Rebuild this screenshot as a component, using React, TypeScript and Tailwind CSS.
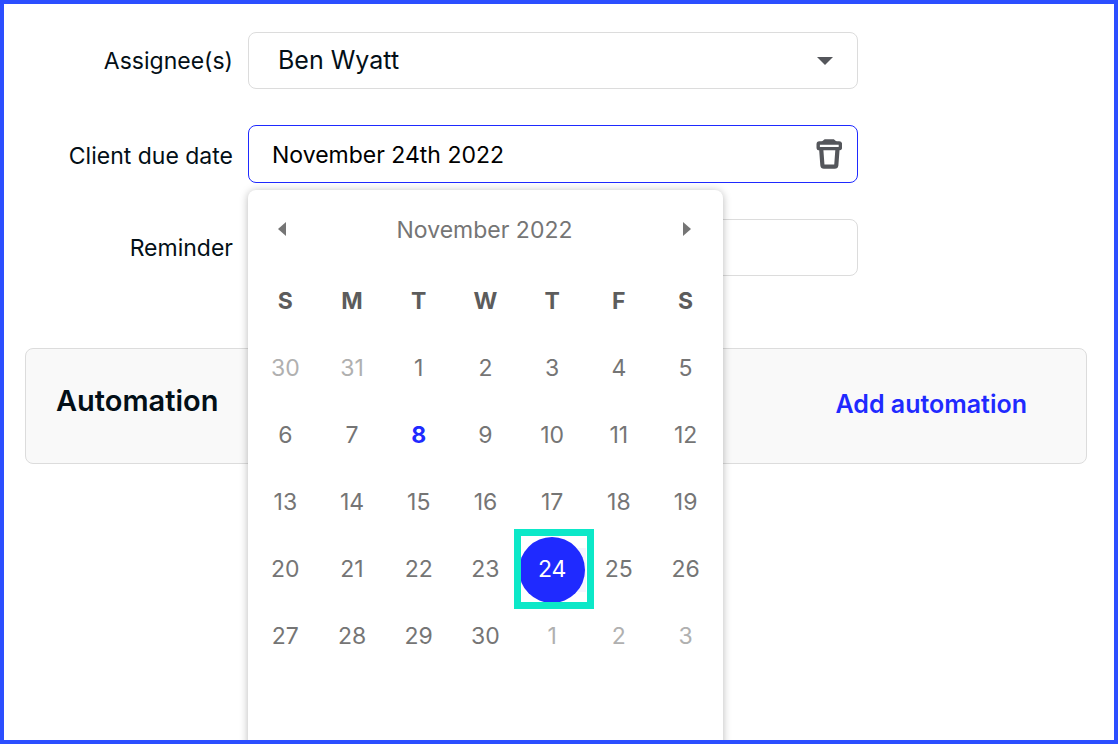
import { useState } from "react";

type Day = { day: number; outside?: boolean };

const weekdays = ["S", "M", "T", "W", "T", "F", "S"];

// November 2022, with the neighbouring days that fill the first and last week
const days: Day[] = [
  { day: 30, outside: true },
  { day: 31, outside: true },
  ...Array.from({ length: 30 }, (_, i) => ({ day: i + 1 })),
  { day: 1, outside: true },
  { day: 2, outside: true },
  { day: 3, outside: true },
];

const weeks = [0, 1, 2, 3, 4].map(w => days.slice(w * 7, w * 7 + 7));
const today = 8;

function TrashIcon() {
  return (
    <svg viewBox="0 0 26 30" className="h-[30px] w-[26px]" fill="none" stroke="#54565b" strokeLinejoin="round">
      <path d="M5 3.2 L8.6 0.2 H17.8 L21.4 3.2 Z" fill="#54565b" stroke="none" />
      <rect x="2.2" y="4" width="22.2" height="5.6" rx="1.2" strokeWidth="3.4" />
      <path d="M5.2 10 L6.4 26.2 Q6.6 27.6 7.9 27.6 H18.7 Q20.1 27.6 20.3 26.2 L21.5 10" strokeWidth="4.2" />
    </svg>
  );
}

function Calendar({ selected, onSelect }: { selected: number; onSelect: (day: number) => void }) {
  return (
    <div className="absolute left-0 top-full z-10 mt-[7px] h-[600px] w-[475px] rounded-lg bg-white px-1 shadow-[0_1px_8px_rgba(0,0,0,0.28)]">
      <div className="flex h-[77px] items-center justify-between pl-[22px] pr-6 text-[#757575]">
        <button type="button" aria-label="Previous month" className="px-1">
          <svg viewBox="0 0 8 14" className="h-[14px] w-2" fill="#757575">
            <path d="M8 0 V14 L0 7 Z" />
          </svg>
        </button>
        <span className="pt-1 text-[23px]">November 2022</span>
        <button type="button" aria-label="Next month" className="px-1">
          <svg viewBox="0 0 8 14" className="h-[14px] w-2" fill="#757575">
            <path d="M0 0 V14 L8 7 Z" />
          </svg>
        </button>
      </div>

      <table className="w-full table-fixed text-center text-[23px] text-[#757575]">
        <thead>
          <tr className="h-[68px]">
            {weekdays.map((name, i) => (
              <th key={i} scope="col" className="p-0 font-bold text-[#5c5c5c]">{name}</th>
            ))}
          </tr>
        </thead>
        <tbody>
          {weeks.map((week, w) => (
            <tr key={w} className="h-[67px]">
              {week.map(({ day, outside }) => {
                const isSelected = !outside && day === selected;
                const isToday = !outside && day === today;
                return (
                  <td key={day} className="p-0">
                    <div className="relative flex justify-center">
                      {isSelected && (
                        <span className="absolute inset-y-[11px] right-0 w-1/2 bg-[#f4f4ff]" />
                      )}
                      <button
                        type="button"
                        onClick={() => !outside && onSelect(day)}
                        aria-pressed={isSelected}
                        className={`relative size-[66px] rounded-full
                                    ${isSelected ? "bg-[#1f2aff] text-white" : ""}
                                    ${isToday && !isSelected ? "font-bold text-[#1f2aff]" : ""}
                                    ${outside ? "text-[#b0b0b0]" : ""}`}
                      >
                        {day}
                      </button>
                      {isSelected && (
                        <span className="pointer-events-none absolute -bottom-1.5 -left-[5px] -right-2 -top-2 border-[7px] border-[#0ce8c8]" />
                      )}
                    </div>
                  </td>
                );
              })}
            </tr>
          ))}
        </tbody>
      </table>
    </div>
  );
}

export default function App() {
  const [selected, setSelected] = useState(24);

  return (
    <main className="min-h-screen overflow-hidden border-4 border-[#2b4eff] bg-white pt-7 font-['Inter',sans-serif] text-[#030f17]">
      <form className="grid grid-cols-[229px_minmax(0,610px)] items-center gap-x-[15px] gap-y-9 text-[23px]">
        <label htmlFor="assignee" className="pt-0.5 text-right">Assignee(s)</label>
        <div className="relative">
          <select
            id="assignee"
            className="h-[57px] w-full appearance-none rounded-lg border border-[#dcdcdc] bg-white px-[29px] text-[25px]"
          >
            <option>Ben Wyatt</option>
          </select>
          <svg viewBox="0 0 16 8" className="pointer-events-none absolute right-[25px] top-[25px] h-2 w-4" fill="#54565b">
            <path d="M0 0 H16 L8 8 Z" />
          </svg>
        </div>

        <label htmlFor="due" className="pt-1 text-right">Client due date</label>
        <div className="relative">
          <div className="flex h-[58px] items-center rounded-lg border border-[#1f2aff] pl-[23px] pr-[15px]">
            <input
              id="due"
              readOnly
              value={`November ${selected}th 2022`}
              className="min-w-0 flex-1 pt-0.5 text-black outline-none"
            />
            <button type="button" aria-label="Clear due date">
              <TrashIcon />
            </button>
          </div>
          <Calendar selected={selected} onSelect={setSelected} />
        </div>

        <label htmlFor="reminder" className="pt-0.5 text-right">Reminder</label>
        <input id="reminder" className="h-[57px] w-full rounded-lg border border-[#dcdcdc] px-[29px]" />
      </form>

      <section className="ml-[21px] mr-[27px] mt-[72px] flex h-[116px] items-center justify-between rounded-lg border border-[#dcdcdc] bg-[#f9f9f9] pl-[30px] pr-[59px]">
        <h2 className="pb-[10px] text-[29px] font-semibold">Automation</h2>
        <button type="button" className="pb-0.5 text-[25px] font-semibold text-[#1f2aff]">Add automation</button>
      </section>
    </main>
  );
}
